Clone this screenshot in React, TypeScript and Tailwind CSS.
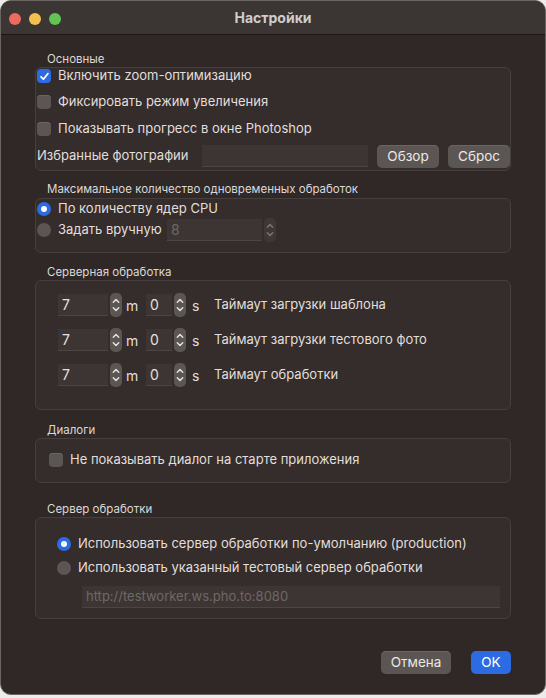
import React from "react";

const font = { fontFamily: "Inter, 'Liberation Sans', sans-serif" };

function Checkbox({ checked = false }: { checked?: boolean }) {
  return (
    <span
      className={`flex h-[14px] w-[14px] shrink-0 items-center justify-center rounded-[4px] ${
        checked ? "bg-[#2d6be2]" : "bg-[#5b5553] shadow-[inset_0_1px_0_#6a6462]"
      }`}
    >
      {checked && (
        <svg viewBox="0 0 12 12" className="h-[11px] w-[11px]">
          <path d="M2.2 6.4 L4.8 9 L9.8 2.8" fill="none" stroke="#fff" strokeWidth="1.9" strokeLinecap="round" strokeLinejoin="round" />
        </svg>
      )}
    </span>
  );
}

function Radio({ checked = false }: { checked?: boolean }) {
  return (
    <span
      className={`flex h-[14px] w-[14px] shrink-0 items-center justify-center rounded-full ${
        checked ? "bg-[#2d6be2]" : "bg-[#5b5553]"
      }`}
    >
      {checked && <span className="h-[6px] w-[6px] rounded-full bg-white" />}
    </span>
  );
}

function Stepper({ dim = false }: { dim?: boolean }) {
  const c = dim ? "#7a7371" : "#e6e2e0";
  return (
    <span
      className={`flex h-[24px] w-[12px] shrink-0 items-center justify-center rounded-[5px] ${
        dim ? "bg-[#3e3735]" : "bg-[#5b5553]"
      }`}
    >
      <svg viewBox="0 0 10 20" className="h-[20px] w-[10px]">
        <path d="M2.3 7.2 L5 4.5 L7.7 7.2" fill="none" stroke={c} strokeWidth="1.5" strokeLinecap="round" strokeLinejoin="round" />
        <path d="M2.3 12.8 L5 15.5 L7.7 12.8" fill="none" stroke={c} strokeWidth="1.5" strokeLinecap="round" strokeLinejoin="round" />
      </svg>
    </span>
  );
}

function Field({ value, className = "", dim = false }: { value?: string; className?: string; dim?: boolean }) {
  return (
    <span
      className={`flex h-[22px] shrink-0 items-center border-b border-[#4c4543] bg-[#3c3533] pl-[4px] ${
        dim ? "text-[#6f6866]" : "text-[#e4e0de]"
      } ${className}`}
    >
      {value}
    </span>
  );
}

function Group({ title, children, className = "" }: { title: string; children: React.ReactNode; className?: string }) {
  return (
    <div>
      <div className="pl-[12px] text-[11.5px] leading-[16px] text-[#dcd8d6]">{title}</div>
      <div className={`rounded-[6px] border border-[#463f3d] bg-[#342d2b] ${className}`}>{children}</div>
    </div>
  );
}

function TimeRow({ label }: { label: string }) {
  return (
    <div className="flex h-[22px] items-center">
      <Field value="7" className="w-[50px] text-[14px]" />
      <span className="ml-[2px]"><Stepper /></span>
      <span className="ml-[4px] w-[20px] text-[14px]">m</span>
      <Field value="0" className="w-[26px] text-[14px]" />
      <span className="ml-[2px]"><Stepper /></span>
      <span className="ml-[6px] w-[22px] text-[14px]">s</span>
      <span>{label}</span>
    </div>
  );
}

function Button({ children, primary = false, className = "" }: { children: React.ReactNode; primary?: boolean; className?: string }) {
  return (
    <span
      className={`flex h-[23px] shrink-0 items-center justify-center rounded-[5px] text-[13.5px] ${
        primary ? "bg-[#2d6be2] text-white" : "bg-[#5b5553] text-[#ece8e6] shadow-[inset_0_1px_0_#6a6462]"
      } ${className}`}
    >
      {children}
    </span>
  );
}

export default function App() {
  return (
    <div className="h-[698px] w-[546px] bg-[#ececec]" style={font}>
      <div className="flex h-[695px] flex-col overflow-hidden rounded-[11px] border border-[#6a6462] bg-[#2f2826] text-[13px] text-[#e2dedc]">
        <div className="relative flex h-[34px] shrink-0 items-center justify-center border-b border-[#1c1716] bg-[#3b3534]">
          <div className="absolute left-[8px] top-[12px] flex gap-[8px]">
            <span className="h-[12px] w-[12px] rounded-full bg-[#ed6a5e]" />
            <span className="h-[12px] w-[12px] rounded-full bg-[#f4bf4f]" />
            <span className="h-[12px] w-[12px] rounded-full bg-[#61c554]" />
          </div>
          <span className="text-[14px] font-bold text-[#d0cccb]">Настройки</span>
        </div>

        <div className="flex flex-col px-[34px] pt-[16px]">
          <Group title="Основные" className="pb-[3px]">
            <label className="flex h-[16px] items-center gap-[7px] pl-[1px]">
              <Checkbox checked />
              <span>Включить zoom-оптимизацию</span>
            </label>
            <label className="mt-[10px] flex h-[16px] items-center gap-[7px] pl-[1px]">
              <Checkbox />
              <span>Фиксировать режим увеличения</span>
            </label>
            <label className="mt-[11px] flex h-[16px] items-center gap-[7px] pl-[1px]">
              <Checkbox />
              <span>Показывать прогресс в окне Photoshop</span>
            </label>
            <div className="mt-[8px] flex h-[22px] items-center">
              <span className="w-[166px] pl-[1px]">Избранные фотографии</span>
              <Field className="w-[166px]" />
              <Button className="ml-[9px] w-[62px]">Обзор</Button>
              <Button className="ml-[9px] w-[62px]">Сброс</Button>
            </div>
          </Group>

          <div className="mt-[10px]">
            <Group title="Максимальное количество одновременных обработок" className="mt-[1px] h-[55px]">
              <label className="flex h-[20px] items-center gap-[7px] pl-[1px]">
                <Radio checked />
                <span>По количеству ядер CPU</span>
              </label>
              <label className="flex h-[22px] items-center pl-[1px]">
                <Radio />
                <span className="ml-[7px] w-[109px]">Задать вручную</span>
                <Field value="8" dim className="w-[95px] text-[14px]" />
                <span className="ml-[2px]"><Stepper dim /></span>
              </label>
            </Group>
          </div>

          <div className="mt-[11px]">
            <Group title="Серверная обработка" className="h-[130px]">
              <div className="flex flex-col gap-[13px] pl-[22px] pt-[13px]">
                <TimeRow label="Таймаут загрузки шаблона" />
                <TimeRow label="Таймаут загрузки тестового фото" />
                <TimeRow label="Таймаут обработки" />
              </div>
            </Group>
          </div>

          <div className="mt-[12px]">
            <Group title="Диалоги" className="h-[45px]">
              <label className="flex h-[41px] items-center gap-[7px] pl-[13px]">
                <Checkbox />
                <span>Не показывать диалог на старте приложения</span>
              </label>
            </Group>
          </div>

          <div className="mt-[18px]">
            <Group title="Сервер обработки" className="h-[102px]">
              <div className="flex flex-col pl-[21px] pt-[16px]">
                <label className="flex h-[20px] items-center gap-[7px]">
                  <Radio checked />
                  <span>Использовать сервер обработки по-умолчанию (production)</span>
                </label>
                <label className="mt-[4px] flex h-[20px] items-center gap-[7px]">
                  <Radio />
                  <span>Использовать указанный тестовый сервер обработки</span>
                </label>
                <div className="mt-[8px] pl-[25px]">
                  <Field value="http://testworker.ws.pho.to:8080" dim className="w-[418px] text-[13px]" />
                </div>
              </div>
            </Group>
          </div>

          <div className="mt-[32px] flex justify-end gap-[20px]">
            <Button className="w-[70px]">Отмена</Button>
            <Button primary className="w-[40px]">OK</Button>
          </div>
        </div>
      </div>
    </div>
  );
}
